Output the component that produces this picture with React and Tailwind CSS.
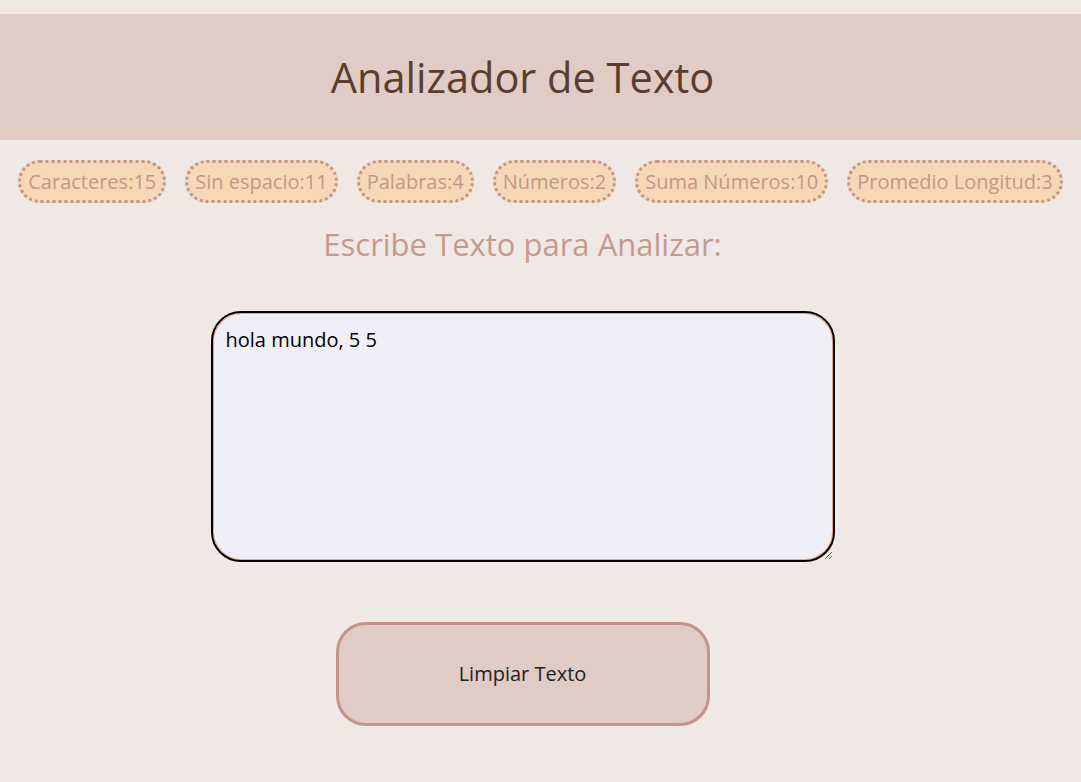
import { useState } from 'react';

const font = { fontFamily: '"Open Sans", Lato, sans-serif' };

const STATS = [
  ['Caracteres', 15],
  ['Sin espacio', 11],
  ['Palabras', 4],
  ['Números', 2],
  ['Suma Números', 10],
  ['Promedio Longitud', 3],
];

export default function App() {
  const [text, setText] = useState('hola mundo, 5 5');

  return (
    <div className="min-h-screen bg-[#f0e8e5] pt-[14px]" style={font}>
      {/* Header */}
      <header className="h-[126px] bg-[#e0ccc5] flex items-center">
        <h1 className="w-[1045px] text-center text-[41.5px] leading-none text-[#5b3d2e] pt-0.5">
          Analizador de Texto
        </h1>
      </header>

      {/* Stats */}
      <div className="flex justify-center gap-[19px] mt-5">
        {STATS.map(([label, value]) => (
          <span
            key={label}
            className="h-[43px] flex items-center px-[7px] rounded-full bg-[#f5d9b6] border-[3px] border-dotted border-[#c4968a] text-[#c4968a] text-[20px]"
          >
            {label}:{value}
          </span>
        ))}
      </div>

      <div className="w-[1045px] flex flex-col items-center">
        <h2 className="mt-[26px] text-[31px] leading-none text-[#c59a8c]">Escribe Texto para Analizar:</h2>

        <textarea
          value={text}
          onChange={(e) => setText(e.target.value)}
          className="mt-[51px] w-[624px] h-[251px] rounded-[30px] border-2 border-black bg-[#f0eff8] px-[13px] py-[15px] text-[20px] leading-[1.2] text-black outline-none resize"
          style={{ ...font, boxShadow: 'inset 0 0 0 1px #e8a878' }}
        />

        <button
          onClick={() => setText('')}
          className="mt-[60px] w-[374px] h-[104px] rounded-[30px] border-[3px] border-[#c4948a] bg-[#e0ccc5] text-[20px] text-[#222]"
        >
          Limpiar Texto
        </button>
      </div>
    </div>
  );
}
